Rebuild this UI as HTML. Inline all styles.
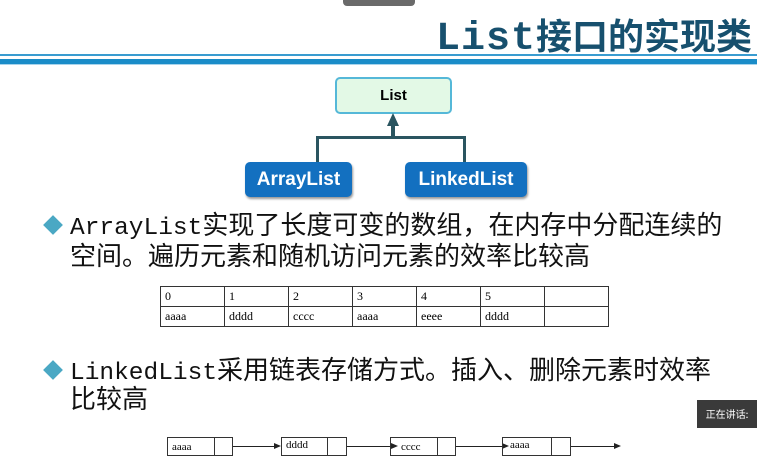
<!DOCTYPE html>
<html><head><meta charset="utf-8"><style>
body{margin:0;width:757px;height:466px;background:#fff;position:relative;overflow:hidden;font-family:"Liberation Sans","Noto Sans CJK SC",sans-serif}
.a{position:absolute}
.title{left:436px;top:12px;height:44px;font-family:"WenQuanYi Zen Hei","Noto Sans CJK SC",sans-serif;font-weight:bold;font-size:36px;line-height:44px;color:#17506e;white-space:nowrap}
.title .l{font-family:"Liberation Mono",monospace;font-size:40px;letter-spacing:1px}
.txt{font-family:"WenQuanYi Zen Hei","Noto Sans CJK SC",sans-serif;font-size:26px;color:#111;white-space:nowrap;line-height:30px;height:30px;left:70px}
.txt .l{font-family:"Liberation Mono",monospace;font-size:24.5px;line-height:20px}
.dia{width:14px;height:14px;background:#4aa8c4;transform:rotate(45deg)}
table{border-collapse:collapse;font-family:"Liberation Serif",serif;font-size:12px}
td{border:1px solid #333;height:19px;padding:0 0 0 4px;width:59px;vertical-align:middle}
.bx{border:1px solid #333;height:19px;font-family:"Liberation Serif",serif;font-size:11px;line-height:19px;box-sizing:border-box}
.ln{height:1px;background:#222}
.ar{width:0;height:0;border-left:7px solid #222;border-top:3.5px solid transparent;border-bottom:3.5px solid transparent}
</style></head><body>
<div class="a" style="left:343px;top:0;width:72px;height:6px;background:#6a6a6a;border-radius:0 0 4px 4px"></div>
<div class="a title"><span class="l">List</span>接口的实现类</div>
<div class="a" style="left:0;top:54px;width:757px;height:2px;background:#3a9cd0"></div>
<div class="a" style="left:0;top:59px;width:757px;height:5px;background:#1a8cc8"></div>
<div class="a" style="left:0;top:64px;width:757px;height:1px;background:#a8d4ec"></div>

<div class="a" style="left:335px;top:77px;width:113px;height:33px;background:#e3f9e6;border:2px solid #55b8d8;border-radius:5px;text-align:center;line-height:33px;font-weight:bold;font-size:15px">List</div>
<div class="a" style="left:391px;top:125px;width:4px;height:13px;background:#2a5560"></div>
<div class="a" style="left:387px;top:113px;width:0;height:0;border-left:6px solid transparent;border-right:6px solid transparent;border-bottom:13px solid #2a5560"></div>
<div class="a" style="left:316px;top:136px;width:150px;height:3px;background:#2a5560"></div>
<div class="a" style="left:316px;top:136px;width:3px;height:27px;background:#2a5560"></div>
<div class="a" style="left:463px;top:136px;width:3px;height:27px;background:#2a5560"></div>
<div class="a" style="left:245px;top:162px;width:107px;height:35px;background:#1370c0;border-radius:5px;color:#fff;font-weight:bold;font-size:19px;text-align:center;line-height:36px;box-shadow:1px 2px 2px #999">ArrayList</div>
<div class="a" style="left:405px;top:162px;width:122px;height:35px;background:#1370c0;border-radius:5px;color:#fff;font-weight:bold;font-size:19px;text-align:center;line-height:36px;box-shadow:1px 2px 2px #999">LinkedList</div>

<div class="a dia" style="left:46px;top:218px"></div>
<div class="a txt" style="top:209px"><span class="l">ArrayList</span>实现了长度可变的数组，在内存中分配连续的</div>
<div class="a txt" style="top:240px">空间。遍历元素和随机访问元素的效率比较高</div>

<table class="a" style="left:160px;top:286px">
<tr><td>0</td><td>1</td><td>2</td><td>3</td><td>4</td><td>5</td><td></td></tr>
<tr><td>aaaa</td><td>dddd</td><td>cccc</td><td>aaaa</td><td>eeee</td><td>dddd</td><td></td></tr>
</table>

<div class="a dia" style="left:46px;top:363px"></div>
<div class="a txt" style="top:354px"><span class="l">LinkedList</span>采用链表存储方式。插入、删除元素时效率</div>
<div class="a txt" style="top:383px">比较高</div>

<div class="a" style="left:697px;top:400px;width:60px;height:28px;background:#3a3a3a;color:#fff;font-size:10px;line-height:28px;text-align:center;font-family:'Noto Sans CJK SC',sans-serif">正在讲话:</div>

<div class="a bx" style="left:167px;top:437px;width:66px;padding-left:4px">aaaa</div>
<div class="a" style="left:214px;top:437px;width:1px;height:19px;background:#333"></div>
<div class="a ln" style="left:233px;top:446px;width:42px"></div><div class="a ar" style="left:274px;top:443px"></div>
<div class="a bx" style="left:281px;top:437px;width:66px;padding-left:4px;line-height:15px">dddd</div>
<div class="a" style="left:327px;top:437px;width:1px;height:19px;background:#333"></div>
<div class="a ln" style="left:347px;top:446px;width:43px"></div><div class="a ar" style="left:391px;top:443px"></div>
<div class="a bx" style="left:390px;top:437px;width:66px;padding-left:10px">cccc</div>
<div class="a" style="left:437px;top:437px;width:1px;height:19px;background:#333"></div>
<div class="a ln" style="left:456px;top:446px;width:46px"></div><div class="a ar" style="left:502px;top:443px"></div>
<div class="a bx" style="left:502px;top:437px;width:69px;padding-left:7px;line-height:15px">aaaa</div>
<div class="a" style="left:551px;top:437px;width:1px;height:19px;background:#333"></div>
<div class="a ln" style="left:571px;top:446px;width:44px"></div><div class="a ar" style="left:614px;top:443px"></div>
</body></html>
